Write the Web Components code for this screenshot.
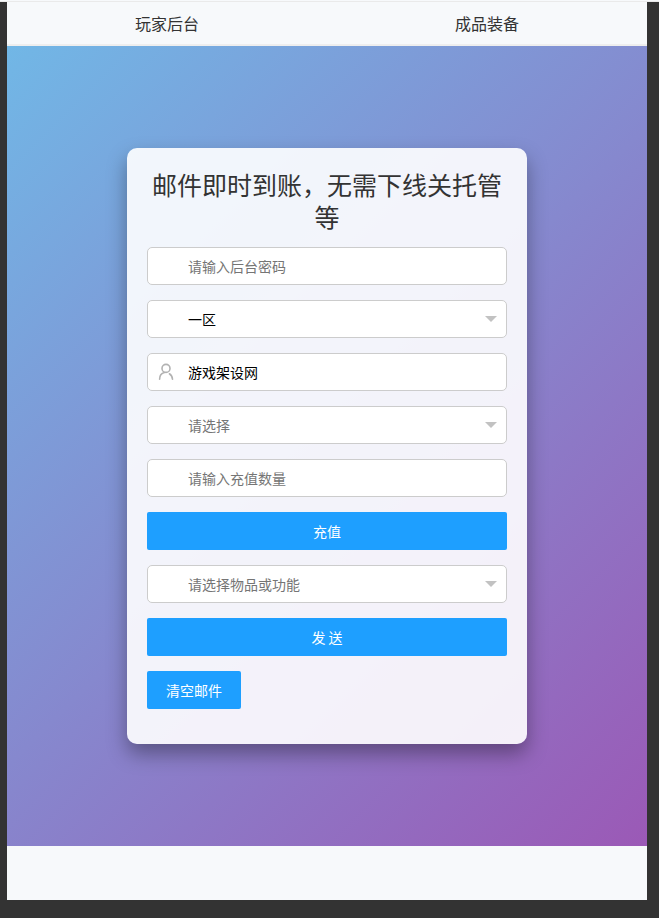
<!DOCTYPE html>
<html lang="zh-CN">
<head>
<meta charset="utf-8">
<meta name="viewport" content="width=device-width, initial-scale=1">
<title>玩家后台</title>
<style>
  html {
    background: #333;
  }

  body {
    margin: 0;
    color: #333;
    font-family: "Noto Sans CJK SC", sans-serif;
    font-size: 14px;
    line-height: 24px;
  }
</style>
</head>
<body>
<mail-app></mail-app>

<script>
class NavLink extends HTMLElement {
  constructor() {
    super();
    this.attachShadow({ mode: "open" });
  }

  connectedCallback() {
    this.shadowRoot.innerHTML = `
      <style>
      :host {
        display: block;
        flex: 1;
        text-align: center;
      }

      a {
        display: block;
        color: #333;
        font-size: 16px;
        line-height: 42px;
        text-decoration: none;
      }

      a:hover {
        color: #1e9fff;
      }
      </style>
      <a href="${this.getAttribute("href")}"><slot></slot></a>
    `;
  }
}

customElements.define("nav-link", NavLink);

class NavBar extends HTMLElement {
  constructor() {
    super();
    this.attachShadow({ mode: "open" });
    this.shadowRoot.innerHTML = `
      <style>
      :host {
        display: block;
        background-color: #f7f9fb;
        border-bottom: 2px solid #eee;
      }

      nav {
        display: flex;
      }
      </style>
      <nav><slot></slot></nav>
    `;
  }
}

customElements.define("nav-bar", NavBar);

class TextField extends HTMLElement {
  constructor() {
    super();
    this.attachShadow({ mode: "open" });
  }

  connectedCallback() {
    const type = this.getAttribute("type") ?? "text";
    const value = this.getAttribute("value") ?? "";
    const hint = this.getAttribute("placeholder") ?? "";
    const label = this.getAttribute("label");

    this.shadowRoot.innerHTML = `
      <style>
      :host {
        display: block;
        position: relative;
      }

      input {
        display: block;
        box-sizing: border-box;
        width: 100%;
        height: 38px;
        margin: 0;
        padding: 0 10px 0 40px;
        border: 1px solid #ccc;
        border-radius: 5px;
        background-color: #fff;
        color: #000;
        font: inherit;
        outline: none;
      }

      input::placeholder {
        color: #757575;
      }

      input:focus {
        border-color: #1e9fff;
      }

      /* icon sits over the left padding of the input */
      .prefix {
        position: absolute;
        top: 0;
        left: 0;
        display: flex;
        align-items: center;
        justify-content: center;
        width: 38px;
        height: 38px;
        pointer-events: none;
      }
      </style>
      <input type="${type}" value="${value}" placeholder="${hint}" aria-label="${label}">
      <span class="prefix"><slot name="icon"></slot></span>
    `;
  }
}

customElements.define("text-field", TextField);

class SelectField extends HTMLElement {
  constructor() {
    super();
    this.attachShadow({ mode: "open" });
  }

  connectedCallback() {
    this.shadowRoot.innerHTML = `
      <style>
      :host {
        display: block;
        position: relative;
      }

      :host::after {
        content: "";
        position: absolute;
        top: 16px;
        right: 10px;
        border: 6px solid transparent;
        border-top-color: #c2c2c2;
        border-bottom-width: 0;
        pointer-events: none;
      }

      select {
        appearance: none;
        display: block;
        box-sizing: border-box;
        width: 100%;
        height: 38px;
        margin: 0;
        padding: 0 30px 0 40px;
        border: 1px solid #ccc;
        border-radius: 5px;
        background-color: #fff;
        color: #000;
        font: inherit;
        outline: none;
        cursor: pointer;
      }

      select.empty {
        color: #757575;
      }

      select:focus {
        border-color: #1e9fff;
      }
      </style>
      <select aria-label="${this.getAttribute("label")}"></select>
    `;

    const select = this.shadowRoot.querySelector("select");
    const hint = this.getAttribute("placeholder");
    const options = this.getAttribute("options");

    if (hint) {
      select.add(new Option(hint, ""));
    }
    if (options) {
      options.split(",").forEach((name) => select.add(new Option(name, name)));
    }

    const update = () => select.classList.toggle("empty", select.value === "");
    select.addEventListener("change", update);
    update();
  }
}

customElements.define("select-field", SelectField);

class ActionButton extends HTMLElement {
  constructor() {
    super();
    this.attachShadow({ mode: "open" });
    this.shadowRoot.innerHTML = `
      <style>
      :host {
        display: block;
      }

      button {
        display: block;
        height: 38px;
        margin: 0;
        padding: 0 19px;
        border: none;
        border-radius: 2px;
        background-color: #1e9fff;
        color: #fff;
        font: inherit;
        cursor: pointer;
      }

      button:hover {
        opacity: 0.8;
      }

      :host([fluid]) button {
        width: 100%;
      }
      </style>
      <button type="button"><slot></slot></button>
    `;
  }
}

customElements.define("action-button", ActionButton);

class MailCard extends HTMLElement {
  constructor() {
    super();
    this.attachShadow({ mode: "open" });
    this.shadowRoot.innerHTML = `
      <style>
      :host {
        display: block;
        box-sizing: border-box;
        width: 100%;
        max-width: 400px;
        padding: 20px 20px 35px;
        border-radius: 10px;
        background-color: rgba(255, 255, 255, 0.9);
        box-shadow: 0 10px 20px rgba(0, 0, 0, 0.35);
      }

      h1 {
        margin: 0 0 15px;
        font-size: 25px;
        font-weight: 400;
        line-height: 32px;
        text-align: center;
      }

      form {
        display: flex;
        flex-direction: column;
        gap: 15px;
      }
      </style>
      <h1><slot name="title"></slot></h1>
      <form><slot></slot></form>
    `;
  }
}

customElements.define("mail-card", MailCard);

class MailApp extends HTMLElement {
  constructor() {
    super();
    this.attachShadow({ mode: "open" });
  }

  connectedCallback() {
    this.shadowRoot.innerHTML = `
      <style>
      :host {
        display: block;
      }

      .strip {
        height: 1px;
        background-color: #f7f9fb;
        border-bottom: 1px solid #eaeaea;
      }

      .page {
        margin: 0 12px 18px 7px;
        background-color: #f7f9fb;
      }

      main {
        display: flex;
        align-items: center;
        justify-content: center;
        box-sizing: border-box;
        min-height: 800px;
        padding: 20px;
        background: linear-gradient(135deg, #71b7e6, #9b59b6);
      }

      footer {
        height: 54px;
      }

      svg {
        display: block;
      }
      </style>
      <div class="strip"></div>
      <div class="page">
        <nav-bar>
          <nav-link href="#player">玩家后台</nav-link>
          <nav-link href="#gear">成品装备</nav-link>
        </nav-bar>
        <main>
          <mail-card>
            <span slot="title">邮件即时到账，无需下线关托管等</span>
            <text-field type="password" label="后台密码" placeholder="请输入后台密码"></text-field>
            <select-field label="区服" options="一区"></select-field>
            <text-field label="角色" value="游戏架设网">
              <svg slot="icon" width="16" height="18" viewBox="0 0 16 18" fill="none" stroke="#b2b2b2" stroke-width="1.6" stroke-linecap="round">
                <circle cx="8" cy="5.4" r="4"/>
                <path d="M1.6 16.2c0-3.4 1.9-5.8 4.8-6.6M11.4 10.8c1.8 1.1 2.9 3 3.1 5.4"/>
              </svg>
            </text-field>
            <select-field label="充值类型" placeholder="请选择"></select-field>
            <text-field label="充值数量" placeholder="请输入充值数量"></text-field>
            <action-button fluid>充值</action-button>
            <select-field label="物品或功能" placeholder="请选择物品或功能"></select-field>
            <action-button fluid>发 送</action-button>
            <action-button>清空邮件</action-button>
          </mail-card>
        </main>
        <footer></footer>
      </div>
    `;
  }
}

customElements.define("mail-app", MailApp);
</script>
</body>
</html>
